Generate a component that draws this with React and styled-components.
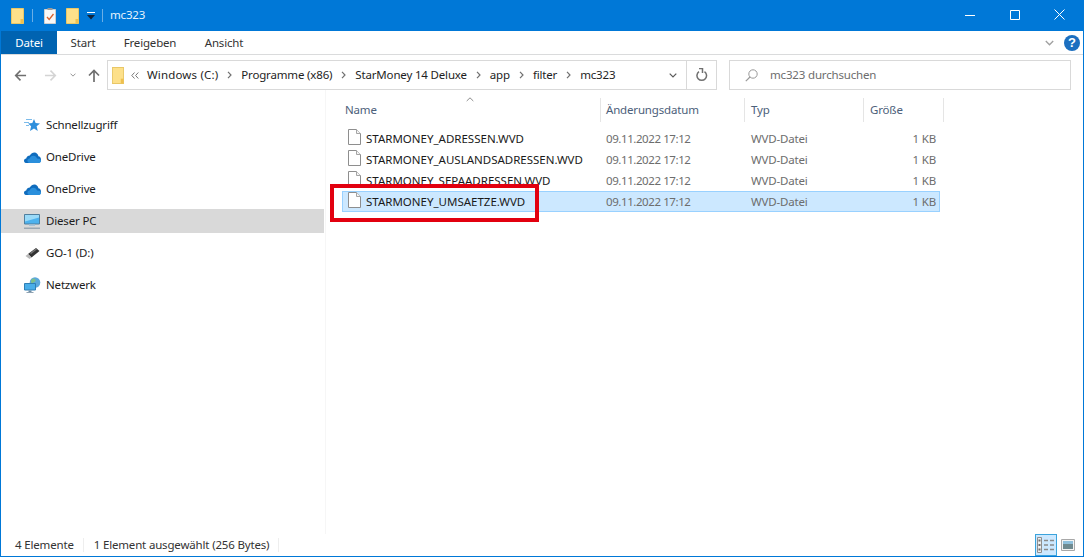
import React from "react";
import styled, { createGlobalStyle } from "styled-components";

const Global = createGlobalStyle`
  html, body { margin: 0; padding: 0; background: #fff; }
  body { font-family: "Noto Sans", "Open Sans", sans-serif; font-size: 11.5px; letter-spacing: -0.17px; color: #1a1a1a; }
`;

const Window = styled.div`
  width: 1084px; height: 557px; box-sizing: border-box; overflow: hidden;
  border: 1px solid #0078d7; border-top: 0;
  display: flex; flex-direction: column; background: #fff;
`;
const TitleBar = styled.div`
  height: 31px; margin: 0 -1px; background: #0078d7; display: flex; align-items: center;
  flex: none; color: #fff;
`;
const Quick = styled.div`
  display: flex; align-items: center; padding-left: 11px; height: 100%;
`;
const Sep = styled.span`
  width: 1px; height: 13px; background: #6aaee6; margin: ${p => p.$m};
`;
const Gap = styled.span`
  width: ${p => p.$w}px; flex: none;
`;
const Title = styled.span`
  color: #e6f2fc; position: relative; top: -1px;
`;
const Controls = styled.div`
  margin-left: auto; display: flex; height: 100%; padding-right: 2px;
`;
const Ctrl = styled.div`
  width: 45px; height: 29px; display: flex; align-items: center; justify-content: center;
`;
const Tabs = styled.div`
  height: 23px; flex: none; display: flex; align-items: stretch; border-bottom: 1px solid #dadbdc;
`;
const FileTab = styled.div`
  width: 56px; background: #0063b1; color: #fff; display: flex; align-items: center; justify-content: center;
`;
const Tab = styled.div`
  width: ${p => p.$w}px; display: flex; align-items: center; justify-content: center; color: #333;
`;
const TabEnd = styled.div`
  margin-left: auto; display: flex; align-items: center; gap: 10px; padding-right: 3px;
`;
const Help = styled.div`
  width: 16px; height: 16px; border-radius: 50%; background: #1c6fc0; color: #fff;
  font: bold 13px/16px "Liberation Sans", sans-serif; text-align: center;
`;
const NavRow = styled.div`
  height: 30px; margin-top: 5px; flex: none; display: flex; align-items: stretch; padding-right: 12px;
`;
const Nav = styled.div`
  width: 106px; padding-left: 13px; box-sizing: border-box; display: flex; align-items: center; flex: none;
`;
const AddrBox = styled.div`
  width: 610px; flex: none; box-sizing: border-box; border: 1px solid #d9d9d9; display: flex; align-items: center;
`;
const Crumbs = styled.div`
  flex: 1; display: flex; align-items: center; padding-left: 4px; min-width: 0; white-space: nowrap;
`;
const CrumbText = styled.span`
  color: #1e1e1e; padding-bottom: 2px; letter-spacing: ${p => (p.$wide ? "0.16px" : "-0.17px")};
`;
const CrumbSep = styled.span`
  width: 23px; display: flex; justify-content: center; align-items: center;
`;
const AddrEnd = styled.div`
  width: 56px; flex: none; height: 100%; display: flex; align-items: center;
`;
const AddrChevron = styled.div`
  width: 26px; display: flex; justify-content: center;
`;
const Refresh = styled.div`
  flex: 1; height: 100%; border-left: 1px solid #d9d9d9; display: flex; align-items: center; justify-content: center;
`;
const Search = styled.div`
  margin-left: 12px; flex: 1; border: 1px solid #d9d9d9; box-sizing: border-box; display: flex; align-items: center;
  padding-left: 15px; gap: 12px; color: #6d6d6d;
`;
const SearchText = styled.span`
  padding-bottom: 2px;
`;
const Body = styled.div`
  flex: 1; display: flex; min-height: 0;
`;
const Sidebar = styled.div`
  width: 324px; flex: none; padding-top: 23px; border-right: 1px solid #f6f6f6;
`;
const NavItem = styled.div`
  height: 24px; margin: 0 1px 8px 0; display: flex; align-items: center; padding-left: 22px; gap: 5px;
  background: ${p => (p.$active ? "#d9d9d9" : "transparent")}; color: #1c1c1c;
`;
const NavLabel = styled.span`
  padding-bottom: 2px;
`;
const IconSlot = styled.span`
  width: 18px; height: 18px; display: flex; align-items: center; justify-content: center; flex: none;
`;
const Main = styled.div`
  flex: 1; position: relative; padding-left: 16px;
`;
const Header = styled.div`
  height: 24px; margin-top: 8px; display: flex; color: #4c607a; position: relative;
`;
const HeadCell = styled.div`
  width: ${p => p.$w}px; box-sizing: border-box; border-right: 1px solid #e5e5e5; padding: 0 0 2px ${p => p.$pl}px;
  display: flex; align-items: center;
`;
const SortArrow = styled.svg`
  position: absolute; left: 124px; top: -1px;
`;
const Rows = styled.div`
  margin-top: 6px; width: 598px;
`;
const Row = styled.div`
  height: 21px; box-sizing: border-box; display: flex; align-items: center;
  border: 1px solid ${p => (p.$sel ? "#99d1ff" : "transparent")};
  background: ${p => (p.$sel ? "#cce8ff" : "transparent")};
`;
const NameCell = styled.div`
  width: 263px; flex: none; align-self: stretch; display: flex; align-items: center; padding-left: 5px; box-sizing: border-box; gap: 5px;
  color: #1a1a1a; white-space: nowrap; letter-spacing: 0;
  svg { align-self: flex-start; }
`;
const DateCell = styled.div`
  width: 145px; flex: none; color: #6d6d6d; letter-spacing: -0.42px;
`;
const TypeCell = styled.div`
  width: 118px; flex: none; color: #6d6d6d;
`;
const SizeCell = styled.div`
  width: 67px; flex: none; text-align: right; color: #6d6d6d;
`;
const Highlight = styled.div`
  position: absolute; left: 4px; top: 94px; width: 209px; height: 38px; box-sizing: border-box;
  border: 4px solid #e2000f; pointer-events: none;
`;
const Status = styled.div`
  height: 22px; flex: none; display: flex; align-items: center; padding-left: 14px; color: #333;
`;
const StatusText = styled.span`
  padding-bottom: 2px;
`;
const StatusSep = styled.span`
  width: 1px; height: 14px; background: #eee; margin: 0 10px 0 9px;
`;
const ViewBtns = styled.div`
  margin-left: auto; display: flex; align-items: center; margin-right: 4px; height: 100%;
`;
const ViewBtn = styled.div`
  width: 22px; height: 22px; box-sizing: border-box; display: flex; align-items: center; justify-content: center;
  border: ${p => (p.$on ? "1px solid #3ba3dc" : "1px solid transparent")};
  background: ${p => (p.$on ? "#cce8ff" : "transparent")};
`;

const Folder = ({ w = 13, h = 16 }) => (
  <svg width={w} height={h} viewBox="0 0 13 16" preserveAspectRatio="none">
    <path d="M.5.500h12v15H.500z" fill="#fde08a" stroke="#e9c766" />
    <path d="M9.500 11h3v4.500h-3z" fill="#efc04f" />
  </svg>
);
const Checklist = () => (
  <svg width="12" height="16" viewBox="0 0 12 16">
    <path d="M.5 1.500h11v14H.500z" fill="#f8f8f8" stroke="#cfcfcf" />
    <path d="M3 9l2.200 2.500L9.500 6" fill="none" stroke="#d9622e" strokeWidth="1.300" />
    <path d="M3.500 0h5v2h-5z" fill="#9a9a9a" />
  </svg>
);
const DropMark = () => (
  <svg width="8" height="8" viewBox="0 0 8 8">
    <path d="M0 0h8v1H0z" fill="#fff" />
    <path d="M0 3h8L4 7.500z" fill="#10233a" />
  </svg>
);
const Arrow = ({ color, flip }) => (
  <svg width="13" height="13" viewBox="0 0 14 14" style={flip ? { transform: "scaleX(-1)" } : undefined}>
    <path d="M13 7H2M7 1.800L1.800 7 7 12.200" fill="none" stroke={color} strokeWidth="1.700" />
  </svg>
);
const Chev = ({ color = "#8c8c8c", w = 8, h = 5 }) => (
  <svg width={w} height={h} viewBox="0 0 8 5">
    <path d="M.7.700L4 4 7.300.700" fill="none" stroke={color} strokeWidth="1.200" />
  </svg>
);
const CrumbArrow = () => (
  <svg width="5" height="8" viewBox="0 0 5 8">
    <path d="M1 .800L4 4 1 7.200" fill="none" stroke="#707070" strokeWidth="1.200" />
  </svg>
);
const Star = () => (
  <svg width="16" height="15" viewBox="0 0 16 15">
    <path d="M10 1l1.600 4.100 4.400.300-3.400 2.900 1.200 4.700-3.800-2.500L6 13l1.100-4.700-3-2.900 4.200-.300z" fill="#2f8fdc" />
    <path d="M2 1.500h6M0 4.500h5M2 7.500h3" stroke="#7cbbea" strokeWidth="1.100" />
  </svg>
);
const Cloud = () => (
  <svg width="17" height="11" viewBox="0 0 17 11">
    <path d="M1.800 11C.800 11 0 10 0 8.800 0 7.600 1 6.600 2.200 6.600c.400-2 2-3.200 3.600-3.200C7 1.400 8.800.300 10.400.400c2.200.100 3.700 1.700 4 3.800 1.500.200 2.600 1.500 2.600 3.200 0 2-1.300 3.600-3 3.600z" fill="#0f6cbd" />
    <path d="M5.600 11c-1.300 0-2.200-1-2.200-2.200 0-1.200 1-2.200 2.200-2.200.500-1.800 2-2.900 3.700-2.900 1.800 0 3.200 1.100 3.800 2.900 1.900 0 3.900.700 3.900 2.300 0 1.100-1 2.100-3 2.100z" fill="#2a8fdc" />
  </svg>
);
const Pc = () => (
  <svg width="16" height="15" viewBox="0 0 16 15">
    <path d="M.5.500h15v9.500H.500z" fill="#4db2ee" stroke="#4f7f9f" />
    <path d="M1 1h14v2.500L1 7.500z" fill="#9adaf8" />
    <path d="M5 10.500h6V12H5z" fill="#a9c4d8" />
    <path d="M0 13.500h16V15H0z" fill="#9ba8b3" />
  </svg>
);
const Usb = () => (
  <svg width="16" height="13" viewBox="0 0 16 13">
    <path d="M4 7L12 1l3.500 3-8 6.500z" fill="#333" />
    <path d="M6 6l6-4.500 1 .800L7 7z" fill="#777" />
    <path d="M4 7l3.500 3.500-2 1.500L1.500 9z" fill="#b9b9b9" />
  </svg>
);
const Network = () => (
  <svg width="17" height="16" viewBox="0 0 17 16">
    <circle cx="11" cy="5.500" r="5.300" fill="#5ba8dc" />
    <path d="M8 2c2-1.500 4 0 3.500 2-.500 1.500-3 1-3.500 3-1-1-1.500-3.500 0-5z" fill="#7fbf8a" />
    <path d="M.5 6.500h11v6.500H.500z" fill="#49aee9" stroke="#2f7fb5" />
    <path d="M4.500 13.500h3V15h-3z" fill="#6f8da3" />
    <path d="M2.500 15h7v1h-7z" fill="#8fa3b3" />
  </svg>
);
const FileIcon = () => (
  <svg width="13" height="16" viewBox="0 0 13 16">
    <path d="M.5.500h8l4 4v11H.500z" fill="#fff" stroke="#8e8e8e" />
    <path d="M8.500.500v4h4" fill="#f4f4f4" stroke="#a5a5a5" />
  </svg>
);
const DetailsIcon = () => (
  <svg width="18" height="16" viewBox="0 0 18 16">
    <path d="M.5.500h4v15h-4z" fill="#eee" stroke="#8f8f8f" />
    <path d="M1.500 2.500h2v2h-2zM1.500 7h2v2h-2zM1.500 11.500h2v2h-2z" fill="#6f6f6f" />
    <path d="M7 3.500h4M13 3.500h4M7 8h4M13 8h4M7 12.500h4M13 12.500h4" stroke="#8a8a8a" strokeWidth="1.300" />
  </svg>
);
const PreviewIcon = () => (
  <svg width="14" height="12" viewBox="0 0 14 12">
    <path d="M.5.500h13v11H.500z" fill="#f4f4f4" stroke="#a8a8a8" />
    <path d="M2 2h10v3H2z" fill="#8fc0dc" />
    <path d="M2 5h10v5H2z" fill="#6f8a90" />
  </svg>
);
const SearchIcon = () => (
  <svg width="13" height="13" viewBox="0 0 13 13">
    <circle cx="8" cy="5" r="4.200" fill="none" stroke="#999" />
    <path d="M5 8L.8 12.200" stroke="#999" strokeWidth="1.200" />
  </svg>
);
const RefreshIcon = () => (
  <svg width="12" height="14" viewBox="0 0 12 14">
    <path d="M8.500 3.600A4.800 4.800 0 1 1 3 3.600" fill="none" stroke="#707070" strokeWidth="1.500" />
    <path d="M3 .500h3.500V5" fill="none" stroke="#707070" strokeWidth="1.500" />
  </svg>
);

const files = ["STARMONEY_ADRESSEN.WVD", "STARMONEY_AUSLANDSADRESSEN.WVD", "STARMONEY_SEPAADRESSEN.WVD", "STARMONEY_UMSAETZE.WVD"];
const navItems = [
  ["Schnellzugriff", <Star />],
  ["OneDrive", <Cloud />],
  ["OneDrive", <Cloud />],
  ["Dieser PC", <Pc />, true],
  ["GO-1 (D:)", <Usb />],
  ["Netzwerk", <Network />],
];
const crumbs = ["Windows (C:)", "Programme (x86)", "StarMoney 14 Deluxe", "app", "filter", "mc323"];

export default function App() {
  return (
    <Window>
      <Global />
      <TitleBar>
        <Quick>
          <Folder />
          <Sep $m="0 11px 0 8px" />
          <Checklist />
          <Gap $w={10} />
          <Folder />
          <Gap $w={8} />
          <DropMark />
          <Sep $m="0 7px 0 7px" />
          <Title>mc323</Title>
        </Quick>
        <Controls>
          <Ctrl>
            <svg width="10" height="10" viewBox="0 0 10 10"><path d="M0 5.500h10" stroke="#fff" /></svg>
          </Ctrl>
          <Ctrl>
            <svg width="10" height="10" viewBox="0 0 10 10"><path d="M.5.500h9v9h-9z" fill="none" stroke="#fff" /></svg>
          </Ctrl>
          <Ctrl>
            <svg width="11" height="11" viewBox="0 0 11 11"><path d="M.5.500l10 10M10.500.500l-10 10" stroke="#fff" /></svg>
          </Ctrl>
        </Controls>
      </TitleBar>
      <Tabs>
        <FileTab>Datei</FileTab>
        <Tab $w={52}>Start</Tab>
        <Tab $w={82}>Freigeben</Tab>
        <Tab $w={66}>Ansicht</Tab>
        <TabEnd>
          <Chev color="#a0a0a0" w={9} h={6} />
          <Help>?</Help>
        </TabEnd>
      </Tabs>
      <NavRow>
        <Nav>
          <Arrow color="#6f6f6f" />
          <Gap $w={17} />
          <Arrow color="#d4d4d4" flip />
          <Gap $w={13} />
          <Chev color="#8c8c8c" w={6} h={4} />
          <Gap $w={12} />
          <svg width="12" height="13" viewBox="0 0 12 13"><path d="M6 13V2M1 6.500L6 1.500l5 5" fill="none" stroke="#6f6f6f" strokeWidth="1.700" /></svg>
        </Nav>
        <AddrBox>
          <Crumbs>
            <Folder w={12} h={17} />
            <Gap $w={7} />
            <svg width="8" height="7" viewBox="0 0 8 7"><path d="M3.500.500L.800 3.500l2.700 3M7.300.500L4.600 3.500l2.700 3" fill="none" stroke="#777" /></svg>
            <Gap $w={8} />
            {crumbs.map((c, i) => (
              <React.Fragment key={i}>
                {i > 0 && <CrumbSep><CrumbArrow /></CrumbSep>}
                <CrumbText $wide={i === 0}>{c}</CrumbText>
              </React.Fragment>
            ))}
          </Crumbs>
          <AddrEnd>
            <AddrChevron><Chev color="#5a5a5a" w={8} h={5} /></AddrChevron>
            <Refresh><RefreshIcon /></Refresh>
          </AddrEnd>
        </AddrBox>
        <Search>
          <SearchIcon />
          <SearchText>mc323 durchsuchen</SearchText>
        </Search>
      </NavRow>
      <Body>
        <Sidebar>
          {navItems.map(([label, icon, active], i) => (
            <NavItem key={i} $active={active}>
              <IconSlot>{icon}</IconSlot>
              <NavLabel>{label}</NavLabel>
            </NavItem>
          ))}
        </Sidebar>
        <Main>
          <Header>
            <HeadCell $w={259} $pl={3}>Name</HeadCell>
            <HeadCell $w={144} $pl={5}>Änderungsdatum</HeadCell>
            <HeadCell $w={119} $pl={6}>Typ</HeadCell>
            <HeadCell $w={80} $pl={6}>Größe</HeadCell>
            <SortArrow width="8" height="5" viewBox="0 0 8 5">
              <path d="M.7 4L4 .800 7.300 4" fill="none" stroke="#8c8c8c" />
            </SortArrow>
          </Header>
          <Rows>
            {files.map((f, i) => (
              <Row key={f} $sel={i === 3}>
                <NameCell><FileIcon />{f}</NameCell>
                <DateCell>09.11.2022 17:12</DateCell>
                <TypeCell>WVD-Datei</TypeCell>
                <SizeCell>1 KB</SizeCell>
              </Row>
            ))}
          </Rows>
          <Highlight />
        </Main>
      </Body>
      <Status>
        <StatusText>4 Elemente</StatusText>
        <StatusSep />
        <StatusText>1 Element ausgewählt (256 Bytes)</StatusText>
        <StatusSep />
        <ViewBtns>
          <ViewBtn $on><DetailsIcon /></ViewBtn>
          <ViewBtn><PreviewIcon /></ViewBtn>
        </ViewBtns>
      </Status>
    </Window>
  );
}
